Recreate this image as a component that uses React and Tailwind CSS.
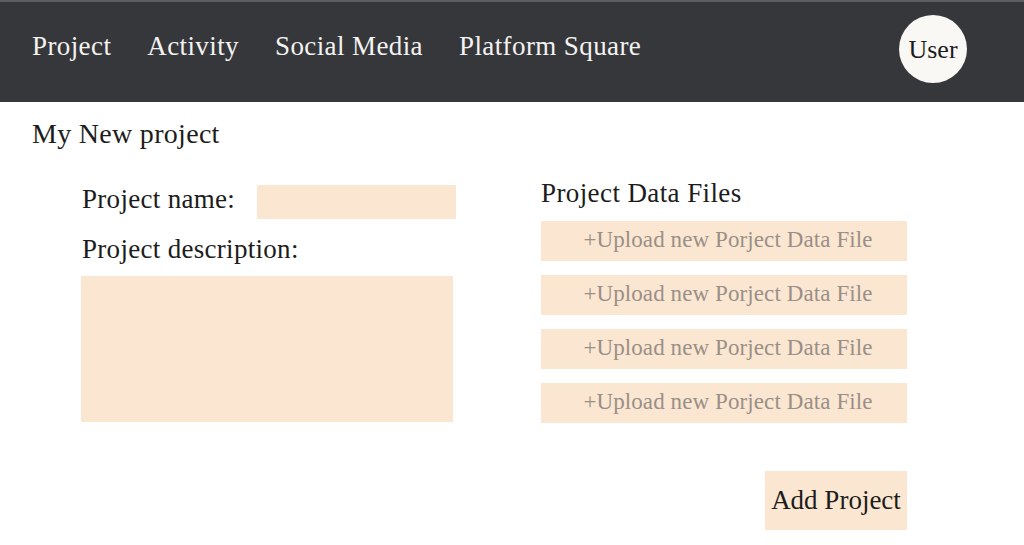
import React from "react";

const navItems = ["Project", "Activity", "Social Media", "Platform Square"];
const uploads = [1, 2, 3, 4];

const App = () => {
  return (
    <div
      className="w-[1024px] h-[545px] bg-white text-[#1c1c1c] overflow-hidden"
      style={{ fontFamily: '"Liberation Serif", "Times New Roman", serif' }}
    >
      {/* top bar */}
      <header className="h-[102px] bg-[#36373b] border-t-2 border-[#5d5e62] flex items-center pl-[32px] pr-[57px]">
        <nav className="flex gap-[36px] pb-[12px]">
          {navItems.map((item) => (
            <a key={item} className="text-[27px] leading-[32px] tracking-[0.4px] text-[#f4f3f1]">
              {item}
            </a>
          ))}
        </nav>
        <div className="ml-auto w-[68px] h-[68px] rounded-full bg-[#faf8f4] flex items-center justify-center text-[26px] text-[#1c1c1c] mb-[6px]">
          User
        </div>
      </header>

      <main className="pt-[16px]">
        <h1 className="pl-[32px] text-[28px] leading-[32px] tracking-[0.3px]">My New project</h1>

        <div className="flex mt-[27px] pl-[82px]">
          {/* left column */}
          <div className="w-[459px] pt-[8px]">
            <div className="flex items-center h-[34px]">
              <label className="w-[175px] text-[27px] leading-[32px] tracking-[0.3px] mb-[6px]">Project name:</label>
              <div className="w-[199px] h-[34px] bg-[#fbe7d1]"></div>
            </div>
            <label className="block mt-[14px] text-[27px] leading-[32px] tracking-[0.3px]">Project description:</label>
            <div className="mt-[11px] -ml-[1px] w-[372px] h-[146px] bg-[#fbe7d1]"></div>
          </div>

          {/* right column */}
          <div className="w-[366px] flex flex-col">
            <h2 className="text-[27px] leading-[32px] tracking-[0.4px]">Project Data Files</h2>
            <div className="mt-[12px] flex flex-col gap-[14px]">
              {uploads.map((n) => (
                <button
                  key={n}
                  className="h-[40px] w-full bg-[#fbe7d1] text-[23px] tracking-[0.1px] text-[#9a8f88] text-center pl-[8px] pb-[2px]"
                >
                  +Upload new Porject Data File
                </button>
              ))}
            </div>
            <button className="self-end mt-[48px] w-[142px] h-[59px] bg-[#fbe7d1] text-[27px] text-[#1c1c1c]">
              Add Project
            </button>
          </div>
        </div>
      </main>
    </div>
  );
};

export default App;
